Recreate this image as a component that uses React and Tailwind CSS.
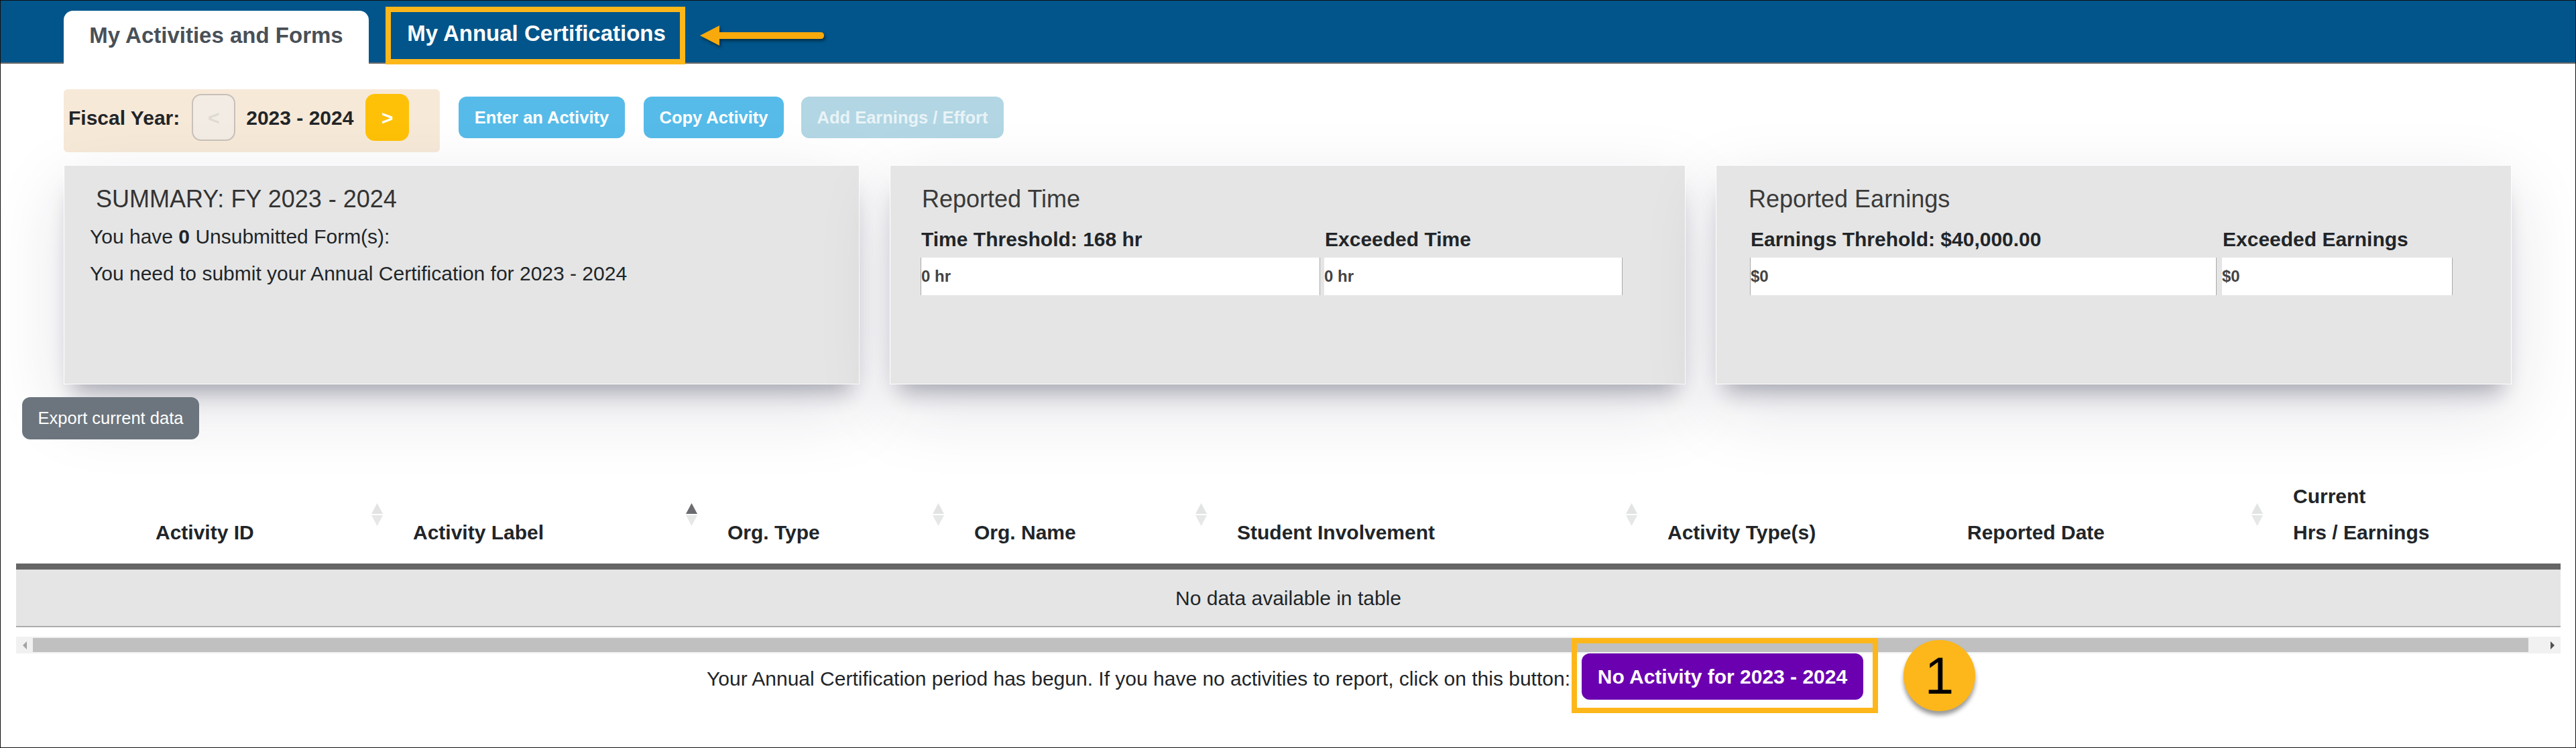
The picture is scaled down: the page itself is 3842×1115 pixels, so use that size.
const cardShadow = "shadow-[0_26px_30px_-14px_rgba(20,20,45,0.3),0_36px_100px_rgba(30,30,70,0.13)]";

const SortIcon = ({ active }) => (
  <svg className="absolute right-[45px] top-[0px]" width="17" height="34" viewBox="0 0 17 34">
    <path d="M8.5 0 L17 16 L0 16 Z" fill={active ? "#6b6b70" : "#e2e4e4"} />
    <path d="M0 18 L17 18 L8.5 34 Z" fill="#e6e7e7" />
  </svg>
);

const Column = ({ width, sort, active, children }) => (
  <div className={`relative h-full flex flex-col justify-end pb-[28px] ${width}`}>
    {sort && (
      <div className="absolute top-[29px] left-0 right-0">
        <SortIcon active={active} />
      </div>
    )}
    {children}
  </div>
);

const StatCard = ({ title, pl, titleMl, gap, first, second, firstValue, secondValue, firstWidth, secondWidth }) => (
  <div className={`w-[1187px] h-[327px] bg-[#e5e5e5] border border-white pt-[30px] ${pl} ${cardShadow}`}>
    <h3 className={`text-[36px] leading-[40px] text-[#3a3a3a] ${titleMl}`}>{title}</h3>
    <div className={`flex mt-[22px] ${gap}`}>
      <div className={firstWidth}>
        <div className="text-[30px] leading-[36px] font-bold text-[#212529] pl-[1px] mb-[9px] whitespace-nowrap">{first}</div>
        <div className="h-[56px] bg-white border-x border-[#a9a9a9] flex items-center text-[24px] font-bold text-[#444]">{firstValue}</div>
      </div>
      <div className={secondWidth}>
        <div className="text-[30px] leading-[36px] font-bold text-[#212529] pl-[1px] mb-[9px] whitespace-nowrap">{second}</div>
        <div className="h-[56px] bg-white border-r border-[#a9a9a9] flex items-center text-[24px] font-bold text-[#444]">{secondValue}</div>
      </div>
    </div>
  </div>
);

export default function App() {
  return (
    <div className="w-[3842px] h-[1115px] overflow-hidden bg-white border border-[#111] font-['Liberation_Sans',sans-serif] text-[#212529]">
      {/* tabs */}
      <div className="h-[94px] bg-[#01558a] border-b-2 border-[#6b6b6b] flex items-end pl-[94px]">
        <div className="w-[455px] h-[79px] -mb-[2px] pb-[6px] bg-white rounded-t-[14px] flex items-center justify-center text-[33px] font-bold text-[#495057]">
          My Activities and Forms
        </div>
        <div className="relative ml-[25px] w-[447px] h-[86px] -mb-[3px] pb-[6px] pl-[3px] flex items-center justify-center text-[33px] font-bold text-white">
          My Annual Certifications
          <div className="absolute inset-0 border-[8px] border-[#fdb71a]" />
          <svg className="absolute left-[469px] top-[27px] drop-shadow-[2px_3px_2px_rgba(0,0,0,0.45)]" width="188" height="32" viewBox="0 0 188 32">
            <path d="M0 16 L29 1 L29 11 L180 11 Q185 11 185 16 Q185 21 180 21 L29 21 L29 31 Z" fill="#f8a90b" />
          </svg>
        </div>
      </div>

      {/* fiscal year + actions */}
      <div className="flex items-start mt-[38px] ml-[94px] h-[94px]">
        <div className="w-[561px] h-[94px] bg-[#f7e9d8] rounded-[6px] flex items-center pl-[7px] pb-[10px] text-[30px] font-bold">
          <span>Fiscal Year:</span>
          <button className="ml-[18px] w-[65px] h-[70px] rounded-[14px] bg-[#f2ece4] border-2 border-[#c9c1b9] text-[#dfdad3] text-[30px] font-bold">&lt;</button>
          <span className="ml-[16px]">2023 - 2024</span>
          <button className="ml-[18px] w-[65px] h-[70px] rounded-[14px] bg-[#ffc107] text-white text-[30px] font-bold">&gt;</button>
        </div>
        <button className="mt-[11px] ml-[28px] w-[248px] h-[62px] rounded-[12px] bg-[#56bbe9] text-white text-[25.5px] font-bold">Enter an Activity</button>
        <button className="mt-[11px] ml-[28px] w-[209px] h-[62px] rounded-[12px] bg-[#56bbe9] text-white text-[25.5px] font-bold">Copy Activity</button>
        <button className="mt-[11px] ml-[26px] w-[302px] h-[62px] rounded-[12px] bg-[#b2d6e3] text-[#e9f3f7] text-[25.5px] font-bold">Add Earnings / Effort</button>
      </div>

      {/* summary cards */}
      <div className="flex gap-[45px] ml-[94px] mt-[19px]">
        <div className={`w-[1187px] h-[327px] bg-[#e5e5e5] border border-white pt-[30px] pl-[38px] ${cardShadow}`}>
          <h3 className="text-[36px] leading-[40px] text-[#333] ml-[9px]">SUMMARY: FY 2023 - 2024</h3>
          <p className="text-[30px] leading-[36px] mt-[18px]">You have <b>0</b> Unsubmitted Form(s):</p>
          <p className="text-[30px] leading-[36px] mt-[19px]">You need to submit your Annual Certification for 2023 - 2024</p>
        </div>
        <StatCard
          title="Reported Time"
          pl="pl-[45px]"
          titleMl="ml-[2px]"
          gap="gap-[6px]"
          first="Time Threshold: 168 hr"
          second="Exceeded Time"
          firstValue="0 hr"
          secondValue="0 hr"
          firstWidth="w-[596px]"
          secondWidth="w-[445px]"
        />
        <StatCard
          title="Reported Earnings"
          pl="pl-[50px]"
          titleMl="-ml-[2px]"
          gap="gap-[8px]"
          first="Earnings Threhold: $40,000.00"
          second="Exceeded Earnings"
          firstValue="$0"
          secondValue="$0"
          firstWidth="w-[696px]"
          secondWidth="w-[344px]"
        />
      </div>

      <button className="relative block ml-[32px] mt-[19px] w-[264px] h-[63px] rounded-[12px] bg-[#6c757d] text-white text-[25.5px]">Export current data</button>

      {/* table header */}
      <div className="relative flex h-[119px] mt-[66px] pl-[231px] text-[30px] font-bold leading-[36px] whitespace-nowrap">
        <Column width="w-[384px]" sort>Activity ID</Column>
        <Column width="w-[469px]" sort active>Activity Label</Column>
        <Column width="w-[368px]" sort>Org. Type</Column>
        <Column width="w-[392px]" sort>Org. Name</Column>
        <Column width="w-[642px]" sort>Student Involvement</Column>
        <Column width="w-[447px]">Activity Type(s)</Column>
        <Column width="w-[486px]" sort>Reported Date</Column>
        <Column width="w-[300px]">
          <span className="mb-[18px]">Current</span>
          <span>Hrs / Earnings</span>
        </Column>
      </div>

      {/* table body */}
      <div className="ml-[23px] w-[3795px]">
        <div className="h-[95px] bg-[#e5e5e5] border-t-[9px] border-t-[#666] border-b-2 border-b-[#ababab] flex items-center justify-center text-[30px]">
          No data available in table
        </div>
        <div className="mt-[14px] h-[25px] bg-[#f1f1f1] flex items-center">
          <svg className="ml-[9px]" width="8" height="12" viewBox="0 0 8 12"><path d="M7 0 L7 12 L1 6 Z" fill="#a3a3a3" /></svg>
          <div className="ml-[8px] w-[3722px] h-[21px] bg-[#c0c0c0]" />
          <svg className="ml-[32px]" width="8" height="12" viewBox="0 0 8 12"><path d="M1 0 L1 12 L7 6 Z" fill="#505050" /></svg>
        </div>
      </div>

      {/* no activity prompt */}
      <div className="flex pl-[1053px] whitespace-nowrap">
        <p className="w-[1305px] pt-[20px] text-[30px] leading-[36px]">Your Annual Certification period has begun. If you have no activities to report, click on this button:</p>
        <button className="relative w-[420px] h-[69px] rounded-[12px] bg-[#6a00b0] text-white text-[30px] font-bold">
          No Activity for 2023 - 2024
          <span className="absolute -left-[15px] -top-[23px] w-[457px] h-[112px] border-[8px] border-[#fdb71a]" />
          <span className="absolute left-[480px] -top-[20px] w-[107px] h-[106px] rounded-full bg-[#fdb71a] shadow-[0_6px_6px_rgba(0,0,0,0.4)] flex items-center justify-center text-[78px] font-normal text-black">1</span>
        </button>
      </div>
    </div>
  );
}
